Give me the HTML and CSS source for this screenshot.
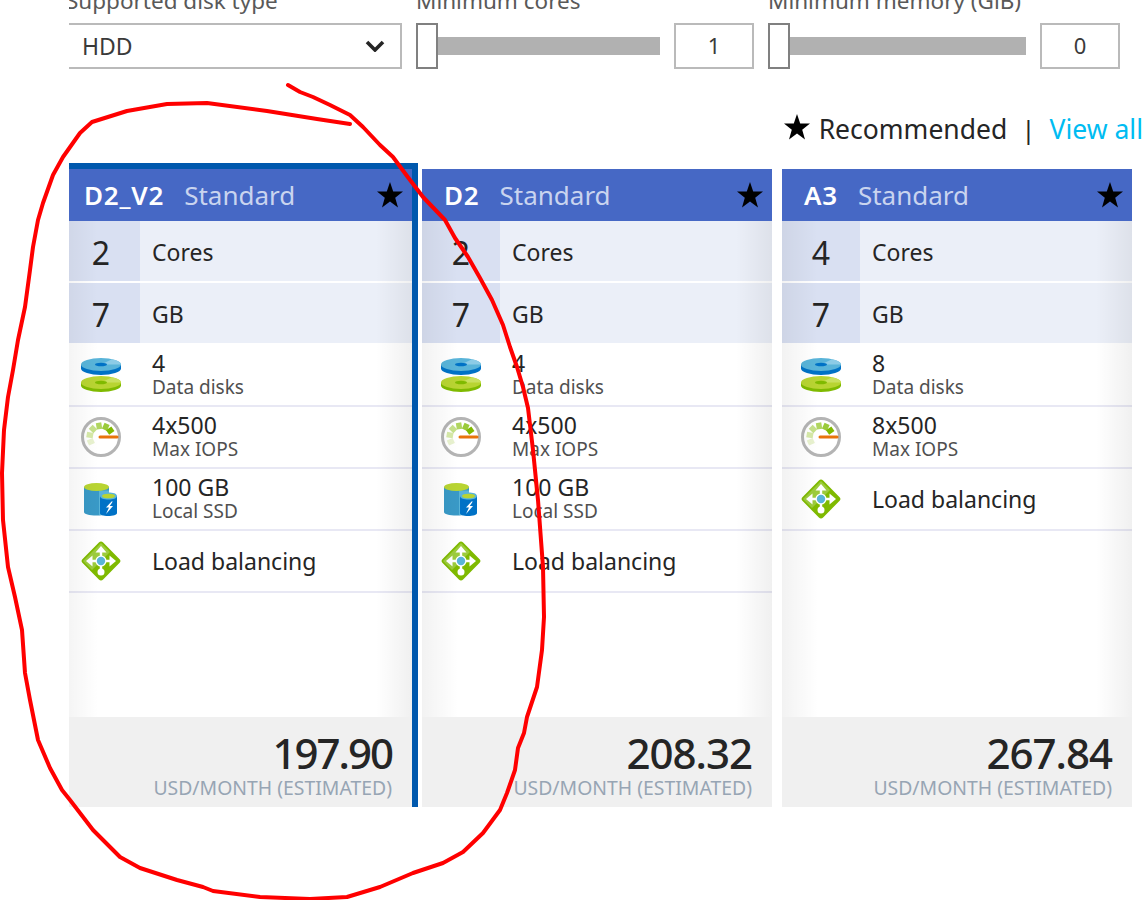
FILE: index.html
```html
<!DOCTYPE html>
<html lang="en">
<head>
    <meta charset="UTF-8">
    <title>Choose a size</title>
    <link rel="stylesheet" href="styles.css">
</head>
<body>

    <!-- Shared icons -->
    <svg class="defs" width="0" height="0">
        <symbol id="star" viewBox="0 0 26 26">
            <polygon points="13,0 16.2,9.4 26,9.6 18.2,15.7 21,25.4 13,19.6 5,25.4 7.8,15.7 0,9.6 9.8,9.4" fill="#000"/>
        </symbol>
        <symbol id="disks" viewBox="0 0 40 34">
            <path d="M0 24.5v3a20 6.5 0 0 0 40 0v-3z" fill="#7fba00"/>
            <ellipse cx="20" cy="24.5" rx="20" ry="6.5" fill="#b8d432"/>
            <path d="M20 24.5L31 19.2A20 6.5 0 0 1 40 24.5z" fill="#c9e05f"/>
            <ellipse cx="20" cy="24.5" rx="6" ry="1.8" fill="#7fba00"/>
            <path d="M0 6.5v4a20 6.5 0 0 0 40 0v-4z" fill="#0072c6"/>
            <ellipse cx="20" cy="6.5" rx="20" ry="6.5" fill="#59b4d9"/>
            <path d="M20 6.5L31 1.2A20 6.5 0 0 1 40 6.5z" fill="#8ccbe6"/>
            <ellipse cx="20" cy="6.5" rx="6" ry="1.8" fill="#0072c6"/>
        </symbol>
        <symbol id="gauge" viewBox="0 0 40 40">
            <circle cx="20" cy="20" r="18.5" fill="#fff" stroke="#b4b4b4" stroke-width="3"/>
            <g fill="none" stroke-width="5.500">
                <path d="M12.750 23.400L6.900 26.100" stroke="#e8f2cf"/>
                <path d="M12.100 18.600L5.700 17.500" stroke="#d6e9a8"/>
                <path d="M14.300 14.300L9.700 9.700" stroke="#c5e08a"/>
                <path d="M18.600 12.100L17.500 5.700" stroke="#b0d55f"/>
                <path d="M23.400 12.750L26.100 6.900" stroke="#9bcb3a"/>
                <path d="M26.600 15.400L31.900 11.700" stroke="#7fba00"/>
            </g>
            <path d="M19 20H36" stroke="#e8730c" stroke-width="3" stroke-linecap="round"/>
        </symbol>
        <symbol id="ssd" viewBox="0 0 33 33">
            <path d="M0 4v25c0 2 5 3.500 12.500 3.500S25 31 25 29V4z" fill="#3999c6"/>
            <path d="M15 7.500h10V29c0 2-5 3-10 3z" fill="#59b4d9"/>
            <ellipse cx="12.500" cy="4" rx="12.500" ry="4" fill="#b8d432"/>
            <path d="M16 13v17c0 2 3 3 8 3s9-1 9-3V13z" fill="#0072c6"/>
            <path d="M16 13c0-2.500 4-3.500 8.500-3.500S33 10.500 33 13s-4 3.500-8.500 3.500S16 15.500 16 13z" fill="#59b4d9"/>
            <ellipse cx="24.500" cy="13" rx="6.500" ry="2.300" fill="#b8d432"/>
            <path d="M27.500 18.500l-5.500 6h3l-3 6.500 7-8h-3.200l3-4.500z" fill="#fff"/>
        </symbol>
        <symbol id="balance" viewBox="0 0 40 40">
            <rect x="5.500" y="5.500" width="29" height="29" rx="3" transform="rotate(45 20 20)" fill="#7fba00"/>
            <polygon points="20,2 2,20 11,29 29,11" fill="#9ccb3c"/>
            <g stroke="#fff" stroke-width="2.400" fill="none">
                <path d="M20 9V30M9 20H31"/>
            </g>
            <g fill="#fff">
                <polygon points="20,5 25.500,11.500 14.500,11.500"/>
                <polygon points="5,20 11.500,14.500 11.500,25.500"/>
                <polygon points="35,20 28.500,14.500 28.500,25.500"/>
                <circle cx="20" cy="31" r="3.500"/>
                <circle cx="20" cy="20" r="5.500"/>
            </g>
            <circle cx="20" cy="20" r="4.200" fill="#59b4d9"/>
        </symbol>
        <symbol id="chevron" viewBox="0 0 20 12">
            <path d="M2 2l8 8 8-8" fill="none" stroke="#252525" stroke-width="3.600"/>
        </symbol>
    </svg>

    <div class="page">
        <div class="inner">

            <!-- Filters -->
            <div class="filters">
                <div class="filter filter-disk">
                    <div class="filter-label">Supported disk type</div>
                    <div class="dropdown">
                        <span>HDD</span>
                        <svg class="chevron"><use href="#chevron"/></svg>
                    </div>
                </div>
                <div class="filter filter-cores">
                    <div class="filter-label">Minimum cores</div>
                    <div class="slider">
                        <div class="thumb"></div>
                        <div class="track"></div>
                        <div class="value">1</div>
                    </div>
                </div>
                <div class="filter filter-memory">
                    <div class="filter-label">Minimum memory (GiB)</div>
                    <div class="slider">
                        <div class="thumb"></div>
                        <div class="track"></div>
                        <div class="value">0</div>
                    </div>
                </div>
            </div>

            <!-- Recommended / view all -->
            <div class="legend">
                <svg class="legend-star"><use href="#star"/></svg>
                <span class="legend-text">Recommended</span>
                <span class="legend-sep">|</span>
                <a class="legend-link" href="#">View all</a>
            </div>

            <!-- Size cards -->
            <div class="cards">

                <div class="card selected">
                    <div class="card-head">
                        <span class="card-name">D2_V2</span>
                        <span class="card-tier">Standard</span>
                        <svg class="card-star"><use href="#star"/></svg>
                    </div>
                    <div class="card-body">
                        <div class="stat"><div class="stat-num">2</div><div class="stat-text">Cores</div></div>
                        <div class="stat"><div class="stat-num">7</div><div class="stat-text">GB</div></div>
                        <div class="specs">
                            <div class="spec">
                                <svg class="icon disks"><use href="#disks"/></svg>
                                <div class="spec-text"><div class="spec-main">4</div><div class="spec-sub">Data disks</div></div>
                            </div>
                            <div class="spec">
                                <svg class="icon gauge"><use href="#gauge"/></svg>
                                <div class="spec-text"><div class="spec-main">4x500</div><div class="spec-sub">Max IOPS</div></div>
                            </div>
                            <div class="spec">
                                <svg class="icon ssd"><use href="#ssd"/></svg>
                                <div class="spec-text"><div class="spec-main">100 GB</div><div class="spec-sub">Local SSD</div></div>
                            </div>
                            <div class="spec">
                                <svg class="icon balance"><use href="#balance"/></svg>
                                <div class="spec-text"><div class="spec-main">Load balancing</div></div>
                            </div>
                        </div>
                    </div>
                    <div class="card-foot">
                        <div class="price">197.90</div>
                        <div class="price-unit">USD/MONTH (ESTIMATED)</div>
                    </div>
                </div>

                <div class="card">
                    <div class="card-head">
                        <span class="card-name">D2</span>
                        <span class="card-tier">Standard</span>
                        <svg class="card-star"><use href="#star"/></svg>
                    </div>
                    <div class="card-body">
                        <div class="stat"><div class="stat-num">2</div><div class="stat-text">Cores</div></div>
                        <div class="stat"><div class="stat-num">7</div><div class="stat-text">GB</div></div>
                        <div class="specs">
                            <div class="spec">
                                <svg class="icon disks"><use href="#disks"/></svg>
                                <div class="spec-text"><div class="spec-main">4</div><div class="spec-sub">Data disks</div></div>
                            </div>
                            <div class="spec">
                                <svg class="icon gauge"><use href="#gauge"/></svg>
                                <div class="spec-text"><div class="spec-main">4x500</div><div class="spec-sub">Max IOPS</div></div>
                            </div>
                            <div class="spec">
                                <svg class="icon ssd"><use href="#ssd"/></svg>
                                <div class="spec-text"><div class="spec-main">100 GB</div><div class="spec-sub">Local SSD</div></div>
                            </div>
                            <div class="spec">
                                <svg class="icon balance"><use href="#balance"/></svg>
                                <div class="spec-text"><div class="spec-main">Load balancing</div></div>
                            </div>
                        </div>
                    </div>
                    <div class="card-foot">
                        <div class="price">208.32</div>
                        <div class="price-unit">USD/MONTH (ESTIMATED)</div>
                    </div>
                </div>

                <div class="card">
                    <div class="card-head">
                        <span class="card-name">A3</span>
                        <span class="card-tier">Standard</span>
                        <svg class="card-star"><use href="#star"/></svg>
                    </div>
                    <div class="card-body">
                        <div class="stat"><div class="stat-num">4</div><div class="stat-text">Cores</div></div>
                        <div class="stat"><div class="stat-num">7</div><div class="stat-text">GB</div></div>
                        <div class="specs">
                            <div class="spec">
                                <svg class="icon disks"><use href="#disks"/></svg>
                                <div class="spec-text"><div class="spec-main">8</div><div class="spec-sub">Data disks</div></div>
                            </div>
                            <div class="spec">
                                <svg class="icon gauge"><use href="#gauge"/></svg>
                                <div class="spec-text"><div class="spec-main">8x500</div><div class="spec-sub">Max IOPS</div></div>
                            </div>
                            <div class="spec">
                                <svg class="icon balance"><use href="#balance"/></svg>
                                <div class="spec-text"><div class="spec-main">Load balancing</div></div>
                            </div>
                        </div>
                    </div>
                    <div class="card-foot">
                        <div class="price">267.84</div>
                        <div class="price-unit">USD/MONTH (ESTIMATED)</div>
                    </div>
                </div>

            </div>
        </div>
    </div>

    <!-- Hand drawn red circle over the page -->
    <svg class="scribble" width="1146" height="900" viewBox="0 0 1146 900">
        <polyline points="288,85 300,92 313,97 330,105 350,115 363,127 380,145 393,157 407,176 423,197 445,220 455,238 468,257 480,278 492,300 503,325 510,347 517,367 523,387 528,408 533,450 538,500 543,567 544,617 542,650 537,687 527,717 524,733 518,748 515,770 507,793 500,810 483,833 463,852 443,863 413,873 380,887 347,897 310,899 260,897 213,891 203,887 177,880 140,868 120,857 93,830 70,800 62,790 50,768 38,740 30,700 25,673 22,630 15,597 8,567 3,520 2,473 4,430 8,397 13,370 18,340 25,307 30,270 33,247 38,220 43,203 53,175 63,157 80,133 92,122 127,111 167,104 207,103 267,111 317,119 350,124"/>
    </svg>

</body>
</html>
```

FILE: styles.css
```css
/* General Styles */
html, body {
    margin: 0;
    padding: 0;
    height: 900px;
    overflow: hidden;
    background-color: #fff;
}

body {
    font-family: "Noto Sans", "Open Sans", sans-serif;
    color: #252525;
    position: relative;
}

.defs {
    position: absolute;
}

/* The shot is cropped on the left, so the content runs under this edge */
.page {
    margin-left: 69px;
    height: 900px;
    overflow: hidden;
}

.inner {
    margin-left: -7px;
    width: 1084px;
}

/* Filters */
.filters {
    display: flex;
    gap: 14px;
    margin-top: -13px;
}

.filter-disk {
    width: 340px;
}

.filter-cores {
    width: 338px;
}

.filter-memory {
    width: 352px;
}

.filter-label {
    font-size: 22.5px;
    line-height: 28px;
    margin-bottom: 8px;
    color: #595959;
    white-space: nowrap;
}

.filter-disk .filter-label {
    padding-left: 4px;
}

.dropdown {
    height: 46px;
    box-sizing: border-box;
    border: 2px solid #bababa;
    display: flex;
    align-items: center;
    justify-content: space-between;
    padding: 0 15px 0 18px;
    font-size: 23px;
    color: #3a3a3a;
}

.chevron {
    width: 20px;
    height: 12px;
}

.slider {
    display: flex;
    align-items: center;
    height: 46px;
}

.thumb {
    width: 22px;
    height: 46px;
    box-sizing: border-box;
    border: 2px solid #808080;
    background-color: #fff;
}

.track {
    flex: 1;
    height: 18px;
    background-color: #b1b1b1;
}

.value {
    width: 80px;
    height: 46px;
    box-sizing: border-box;
    margin-left: 14px;
    border: 2px solid #bababa;
    text-align: center;
    line-height: 40px;
    font-size: 22px;
    color: #3a3a3a;
}

/* Legend */
.legend {
    display: flex;
    align-items: center;
    justify-content: flex-end;
    height: 40px;
    margin-top: 40px;
    margin-bottom: 20px;
    width: 1081px;
    font-size: 26.5px;
    white-space: nowrap;
}

.legend-star {
    width: 26px;
    height: 26px;
    margin-right: 9px;
    margin-bottom: 4px;
}

.legend-sep {
    margin: 0 14px;
    font-size: 26px;
}

.legend-link {
    color: #00bcf2;
    text-decoration: none;
}

/* Cards */
.cards {
    display: flex;
    align-items: flex-start;
}

.card {
    width: 350px;
    height: 638px;
    box-sizing: border-box;
    margin-right: 10px;
    display: flex;
    flex-direction: column;
    flex-shrink: 0;
}

.card.selected {
    width: 356px;
    height: 644px;
    margin-top: -6px;
    margin-right: 4px;
    border-top: 6px solid #0058ad;
    border-right: 6px solid #0058ad;
}

.card-head {
    height: 52px;
    flex-shrink: 0;
    background-color: #4668c5;
    display: flex;
    align-items: center;
    padding: 0 9px 0 22px;
    font-size: 26px;
}

.card-name {
    color: #fff;
    font-weight: 600;
    margin-right: 20px;
    letter-spacing: 0.8px;
}

.card-tier {
    color: #c9d4ef;
}

.card-star {
    width: 26px;
    height: 26px;
    margin-left: auto;
}

.card-body {
    flex: 1;
    position: relative;
}

/* Soft grey fade on both edges of the card */
.card-body::after {
    content: "";
    position: absolute;
    top: 0;
    left: 0;
    right: 0;
    bottom: 0;
    background: linear-gradient(to right, rgba(0, 0, 0, 0.05), rgba(0, 0, 0, 0) 36px, rgba(0, 0, 0, 0) calc(100% - 36px), rgba(0, 0, 0, 0.06));
    pointer-events: none;
}

.stat {
    display: flex;
    height: 60px;
    margin-bottom: 2px;
    background-color: #ebeff8;
}

.stat:nth-child(2) {
    margin-bottom: 0;
}

.stat-num {
    width: 78px;
    background-color: #d9e0f2;
    text-align: center;
    font-size: 32px;
    line-height: 64px;
}

.stat-text {
    padding-left: 12px;
    font-size: 23px;
    line-height: 62px;
}

.specs {
    padding-top: 2px;
}

.spec {
    display: flex;
    align-items: center;
    height: 62px;
    box-sizing: border-box;
    border-bottom: 2px solid #e8e8f4;
}

.icon {
    width: 40px;
    margin-left: 19px;
    margin-right: 31px;
    flex-shrink: 0;
}

.icon.disks {
    height: 34px;
}

.icon.gauge,
.icon.balance {
    height: 40px;
}

.icon.ssd {
    width: 33px;
    height: 33px;
    margin-left: 22px;
    margin-right: 35px;
}

.spec-main {
    font-size: 23px;
    line-height: 24px;
}

.spec-sub {
    font-size: 19px;
    line-height: 23px;
    margin-top: 1px;
    color: #505050;
}

.card-foot {
    height: 90px;
    flex-shrink: 0;
    background-color: #f0f0f0;
    text-align: right;
    padding-right: 20px;
}

.price {
    font-size: 42px;
    font-weight: 500;
    line-height: 50px;
    padding-top: 11px;
    letter-spacing: -1px;
}

.selected .price {
    letter-spacing: -2px;
}

.price-unit {
    font-size: 19.4px;
    line-height: 20px;
    color: #97a5b4;
    white-space: nowrap;
}

/* Scribble */
.scribble {
    position: absolute;
    top: 0;
    left: 0;
    pointer-events: none;
}

.scribble polyline {
    fill: none;
    stroke: #f00;
    stroke-width: 4;
    stroke-linejoin: round;
    stroke-linecap: round;
}
```
